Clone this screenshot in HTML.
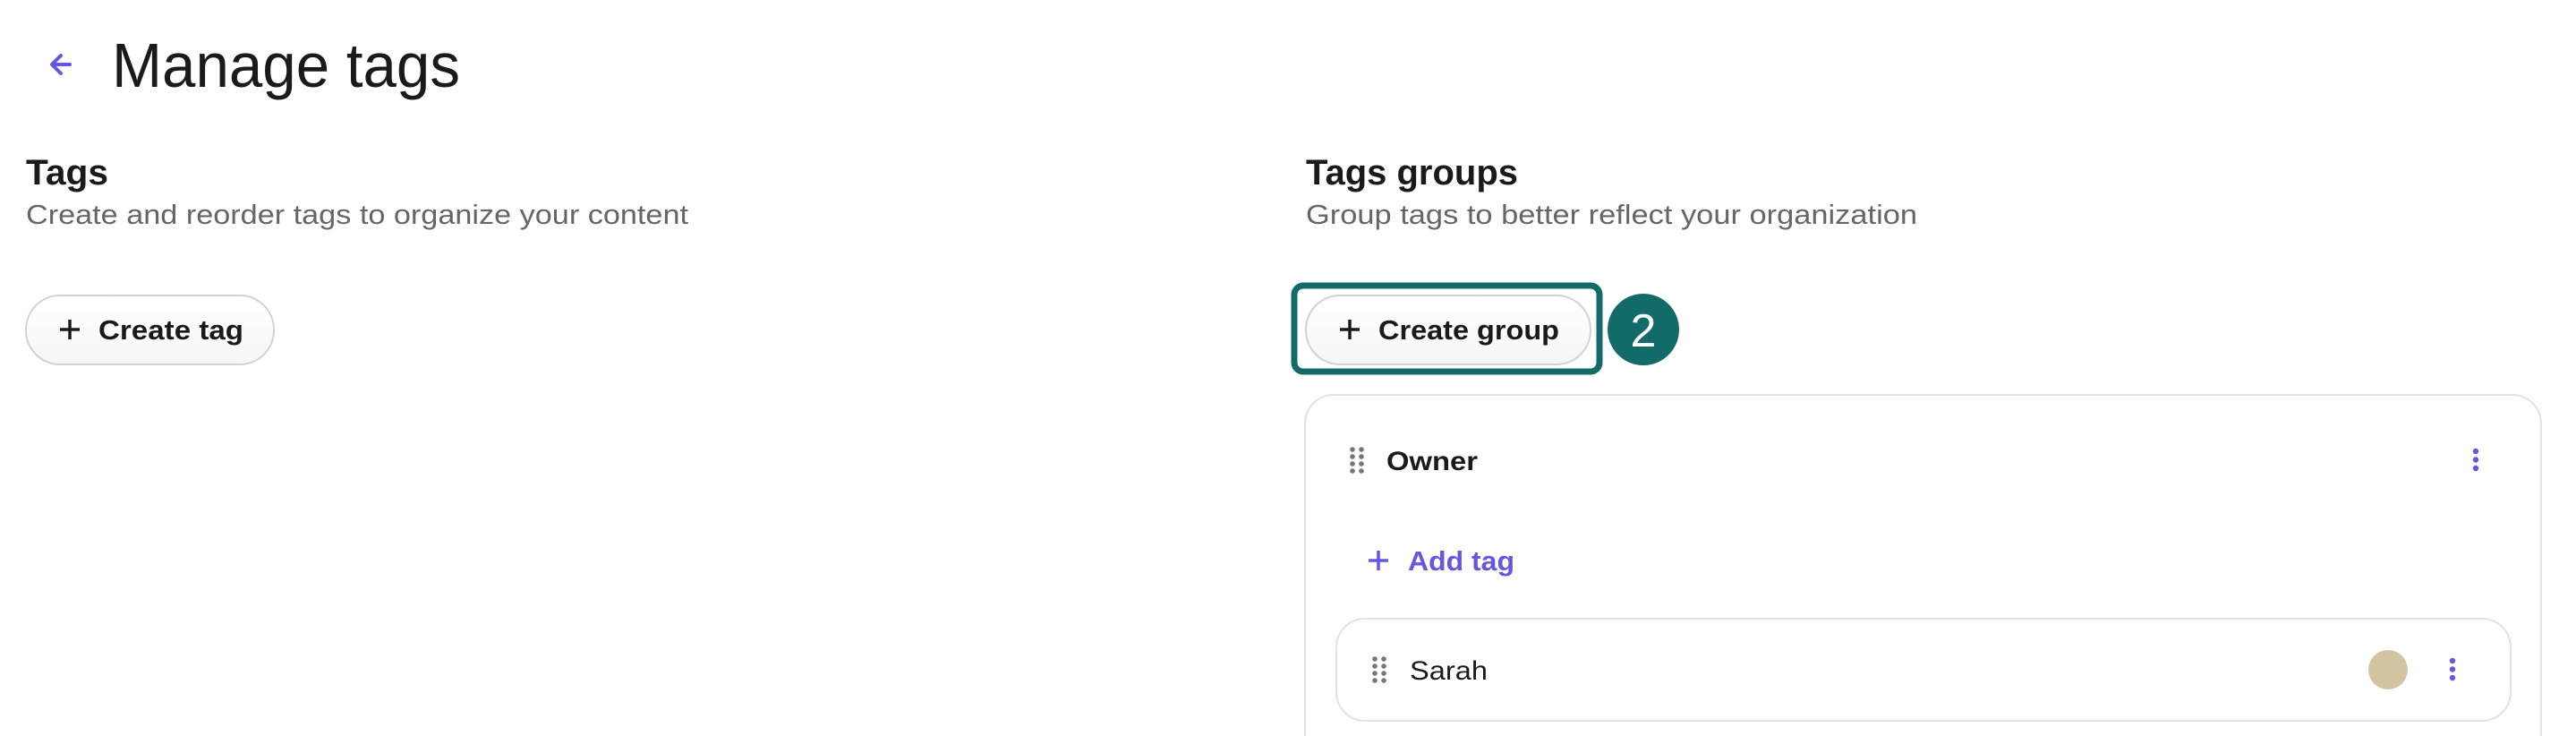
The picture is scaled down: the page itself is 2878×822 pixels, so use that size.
<!DOCTYPE html>
<html><head><meta charset="utf-8"><style>
html,body{margin:0;padding:0;background:#fff;}
svg{display:block}
text{font-family:"Liberation Sans",sans-serif;}
</style></head><body>
<svg width="2878" height="822" viewBox="0 0 2878 822" xmlns="http://www.w3.org/2000/svg">
<defs>
<linearGradient id="bg" x1="0" y1="0" x2="0" y2="1"><stop offset="0" stop-color="#ffffff"/><stop offset="1" stop-color="#f6f6f6"/></linearGradient>
<g id="drag" fill="#777"><circle cx="0" cy="0" r="2.8"/><circle cx="10" cy="0" r="2.8"/><circle cx="0" cy="8" r="2.8"/><circle cx="10" cy="8" r="2.8"/><circle cx="0" cy="16" r="2.8"/><circle cx="10" cy="16" r="2.8"/><circle cx="0" cy="24" r="2.8"/><circle cx="10" cy="24" r="2.8"/></g>
<g id="kebab" fill="#6457e0"><circle cx="0" cy="0" r="3.2"/><circle cx="0" cy="9.5" r="3.2"/><circle cx="0" cy="19" r="3.2"/></g>
</defs>
<rect width="2878" height="822" fill="#fff"/>
<path d="M78 72 H59 M68 62 L58 72 L68 82" stroke="#6457e0" stroke-width="4" fill="none" stroke-linecap="round" stroke-linejoin="round"/>
<text x="125" y="97" font-size="70" fill="#1a1a1a" textLength="389" lengthAdjust="spacingAndGlyphs">Manage tags</text>

<text x="29" y="206" font-size="40" font-weight="bold" fill="#1a1a1a" textLength="92" lengthAdjust="spacingAndGlyphs">Tags</text>
<text x="29" y="250" font-size="31" fill="#666" textLength="740" lengthAdjust="spacingAndGlyphs">Create and reorder tags to organize your content</text>

<rect x="29" y="330" width="277" height="77" rx="38" fill="url(#bg)" stroke="#d2d2d2" stroke-width="2"/>
<path d="M78 357 V379 M67 368 H89" stroke="#1a1a1a" stroke-width="3.5"/>
<text x="110" y="379" font-size="31" font-weight="bold" fill="#1a1a1a" textLength="162" lengthAdjust="spacingAndGlyphs">Create tag</text>

<text x="1459" y="206" font-size="40" font-weight="bold" fill="#1a1a1a" textLength="237" lengthAdjust="spacingAndGlyphs">Tags groups</text>
<text x="1459" y="250" font-size="31" fill="#666" textLength="683" lengthAdjust="spacingAndGlyphs">Group tags to better reflect your organization</text>

<rect x="1446" y="319" width="341" height="96" rx="10" fill="none" stroke="#136b69" stroke-width="7"/>
<rect x="1459" y="330" width="318" height="77" rx="38" fill="url(#bg)" stroke="#d2d2d2" stroke-width="2"/>
<path d="M1508 357 V379 M1497 368 H1519" stroke="#1a1a1a" stroke-width="3.5"/>
<text x="1540" y="379" font-size="31" font-weight="bold" fill="#1a1a1a" textLength="202" lengthAdjust="spacingAndGlyphs">Create group</text>
<circle cx="1836" cy="368" r="40" fill="#136b69"/>
<text x="1836" y="387" font-size="52" fill="#fff" text-anchor="middle">2</text>

<rect x="1458" y="441" width="1381" height="420" rx="32" fill="#fff" stroke="#e2e2e2" stroke-width="2"/>
<use href="#drag" x="1511" y="502"/>
<text x="1549" y="525" font-size="30" font-weight="bold" fill="#1a1a1a" textLength="102" lengthAdjust="spacingAndGlyphs">Owner</text>
<use href="#kebab" x="2766" y="504"/>
<path d="M1540 615 V637 M1529 626 H1551" stroke="#6457e0" stroke-width="3.5"/>
<text x="1573" y="637" font-size="31" font-weight="bold" fill="#6457e0" textLength="119" lengthAdjust="spacingAndGlyphs">Add tag</text>

<rect x="1493" y="691" width="1312" height="114" rx="32" fill="#fff" stroke="#e2e2e2" stroke-width="2"/>
<use href="#drag" x="1536" y="736"/>
<text x="1575" y="759" font-size="30" fill="#1a1a1a" textLength="87" lengthAdjust="spacingAndGlyphs">Sarah</text>
<circle cx="2668" cy="748" r="22" fill="#d2c4a1"/>
<use href="#kebab" x="2740" y="738"/>
</svg>
</body></html>
